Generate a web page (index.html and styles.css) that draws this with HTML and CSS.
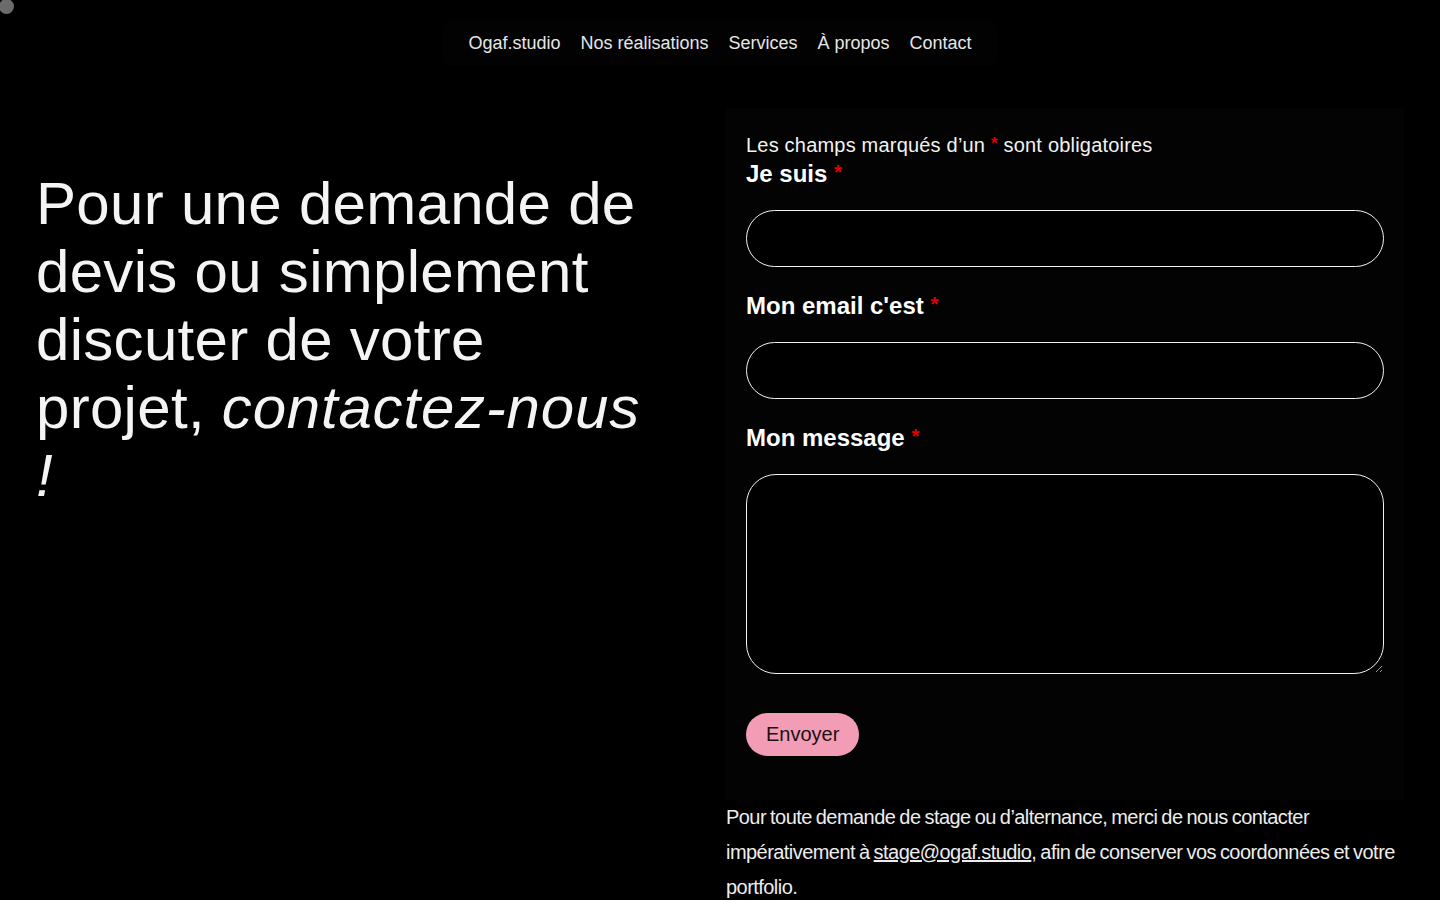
FILE: index.html
```html
<!DOCTYPE html>
<html lang="fr">
<head>
    <meta charset="UTF-8">
    <meta name="viewport" content="width=device-width, initial-scale=1.0">
    <title>Contact — Ogaf.studio</title>
    <link rel="stylesheet" href="styles.css">
</head>
<body>
    <div class="cursor-dot"></div>

    <header class="site-header">
        <nav class="main-nav">
            <a href="#">Ogaf.studio</a>
            <a href="#">Nos réalisations</a>
            <a href="#">Services</a>
            <a href="#">À propos</a>
            <a href="#">Contact</a>
        </nav>
    </header>

    <main class="contact">
        <div class="contact-intro">
            <h1>Pour une demande de devis ou simplement discuter de votre projet, <em>contactez-nous !</em></h1>
        </div>

        <div class="contact-side">
            <form class="contact-form">
                <p class="form-note">Les champs marqués d’un <span class="req">*</span> sont obligatoires</p>

                <div class="field">
                    <label for="name">Je suis <span class="req">*</span></label>
                    <input type="text" id="name">
                </div>

                <div class="field">
                    <label for="email">Mon email c'est <span class="req">*</span></label>
                    <input type="email" id="email">
                </div>

                <div class="field">
                    <label for="message">Mon message <span class="req">*</span></label>
                    <textarea id="message"></textarea>
                </div>

                <button type="submit">Envoyer</button>
            </form>

            <p class="stage-note">Pour toute demande de stage ou d’alternance, merci de nous contacter impérativement à <a href="#">stage@ogaf.studio</a>, afin de conserver vos coordonnées et votre portfolio.</p>
        </div>
    </main>
</body>
</html>
```

FILE: styles.css
```css
* {
    box-sizing: border-box;
}
body {
    font-family: "Liberation Sans", Arial, sans-serif;
    background: #000;
    color: #f2f2f2;
    margin: 0;
    padding: 0 36px;
    min-height: 100vh;
    overflow: hidden;
}
.cursor-dot {
    position: absolute;
    top: -1px;
    left: -1px;
    width: 15px;
    height: 15px;
    border-radius: 50%;
    background: #6b6b6b;
}
.site-header {
    display: flex;
    justify-content: center;
    padding-top: 20px;
}
.main-nav {
    display: flex;
    gap: 20px;
    padding: 12px 26px;
    border-radius: 10px;
    background: #020202;
}
.main-nav a {
    color: #e6e6e6;
    text-decoration: none;
    font-size: 18px;
    line-height: 22px;
}
.contact {
    display: grid;
    grid-template-columns: 1fr 678px;
    gap: 36px;
    margin-top: 42px;
}
.contact-intro h1 {
    margin: 62px 0 0;
    max-width: 616px;
    font-size: 60px;
    line-height: 68px;
    font-weight: 400;
    letter-spacing: 0.3px;
    color: #f4f4f4;
}
.contact-intro em {
    font-style: italic;
    letter-spacing: 0.8px;
}
.contact-form {
    background: #030303;
    padding: 23px 20px 44px;
}
.form-note {
    margin: 0;
    font-size: 20px;
    line-height: 26px;
    letter-spacing: 0.2px;
    color: #f2f2f2;
}
.req {
    color: #e10000;
    font-weight: 700;
    vertical-align: 3px;
    font-size: 0.85em;
}
.field {
    display: flex;
    flex-direction: column;
    gap: 22px;
    margin-bottom: 23px;
}
.field label {
    font-size: 24px;
    line-height: 29px;
    font-weight: 700;
    color: #fff;
}
.field input,
.field textarea {
    width: 100%;
    background: #000;
    border: 1px solid #f2f2f2;
    color: #fff;
    font: inherit;
    font-size: 18px;
    padding: 0 24px;
}
.field input {
    height: 57px;
    border-radius: 30px;
}
.field textarea {
    height: 200px;
    border-radius: 30px;
    padding: 18px 24px;
}
.contact-form button {
    margin-top: 16px;
    background: #f29cb5;
    color: #1c1014;
    border: none;
    border-radius: 22px;
    font-family: inherit;
    font-size: 20px;
    line-height: 23px;
    padding: 10px 20px;
    cursor: pointer;
}
.stage-note {
    margin: 0;
    font-size: 20px;
    line-height: 35px;
    letter-spacing: -0.55px;
    word-spacing: -1px;
    color: #ededed;
}
.stage-note a {
    color: #ededed;
}
```
